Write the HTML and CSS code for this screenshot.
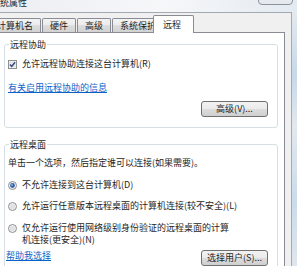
FILE: index.html
```html
<!DOCTYPE html>
<html lang="zh-CN">
<head>
  <meta charset="UTF-8" />
  <title>系统属性 - 远程</title>
  <link rel="stylesheet" href="styles.css">
</head>
<body>
  <div class="window">
    <div class="titlebar">
      <span class="title">系统属性</span>
      <span class="close-btn"></span>
    </div>

    <div class="frame-body">
      <div class="client">
        <div class="tabs">
          <span class="tab">计算机名</span>
          <span class="tab">硬件</span>
          <span class="tab">高级</span>
          <span class="tab">系统保护</span>
          <span class="tab tab-active">远程</span>
        </div>

        <div class="panel">
          <section class="group">
            <div class="group-title">远程协助</div>
            <label class="option check-row">
              <svg class="box" width="9" height="9" viewBox="0 0 9 9">
                <rect x="0.5" y="0.5" width="8" height="8" fill="#f3f3f3" stroke="#8e8f8f"/>
                <rect x="1.5" y="1.5" width="6" height="6" fill="#e4e6e8"/>
                <path d="M2 4.6 L3.7 6.4 L7.1 2.2" fill="none" stroke="#33437a" stroke-width="1.4"/>
              </svg>
              <span>允许远程协助连接这台计算机(R)</span>
            </label>
            <a class="link link-info" href="#">有关启用远程协助的信息</a>
            <button class="btn btn-advanced">高级(V)...</button>
          </section>

          <section class="group group-desktop">
            <div class="group-title">远程桌面</div>
            <p class="desc">单击一个选项，然后指定谁可以连接(如果需要)。</p>

            <label class="option radio-first">
              <svg class="dot" width="9" height="9" viewBox="0 0 9 9">
                <circle cx="4.5" cy="4.5" r="4" fill="#f1f2f3" stroke="#8e8f8f"/>
                <circle cx="4.5" cy="4.5" r="2.4" fill="#2f62a8"/>
                <circle cx="4" cy="4" r="0.9" fill="#8fb4e6"/>
              </svg>
              <span>不允许连接到这台计算机(D)</span>
            </label>

            <label class="option radio-second">
              <svg class="dot" width="9" height="9" viewBox="0 0 9 9">
                <circle cx="4.5" cy="4.5" r="4" fill="#f1f2f3" stroke="#8e8f8f"/>
                <circle cx="4.5" cy="4.5" r="2.6" fill="#dfe1e3"/>
              </svg>
              <span>允许运行任意版本远程桌面的计算机连接(较不安全)(L)</span>
            </label>

            <label class="option radio-third">
              <svg class="dot" width="9" height="9" viewBox="0 0 9 9">
                <circle cx="4.5" cy="4.5" r="4" fill="#f1f2f3" stroke="#8e8f8f"/>
                <circle cx="4.5" cy="4.5" r="2.6" fill="#dfe1e3"/>
              </svg>
              <span>仅允许运行使用网络级别身份验证的远程桌面的计算<br>机连接(更安全)(N)</span>
            </label>

            <div class="bottom-row">
              <a class="link link-help" href="#">帮助我选择</a>
              <button class="btn">选择用户(S)...</button>
            </div>
          </section>
        </div>
      </div>
      <div class="frame-edge"></div>
    </div>
  </div>
</body>
</html>
```

FILE: styles.css
```css
html, body {
  margin: 0;
  overflow: hidden;
  background: #f0f0f0;
  font-family: "Noto Sans CJK SC", "Noto Sans", sans-serif;
  font-size: 9px;
  color: #1e1e1e;
}
.window {
  width: 297px;
  height: 266px;
  overflow: hidden;
  display: flex;
  flex-direction: column;
}

/* title bar */
.titlebar {
  height: 12px;
  flex: none;
  display: flex;
  align-items: flex-start;
  background: linear-gradient(to right, #eceef1, #f6f7f9 55%, #e4eaf1);
}
.title {
  margin: -3px 0 0 -9px;
  line-height: 12px;
  color: #2a2a2a;
}
.close-btn {
  margin: -13px 4px 0 auto;
  width: 33px;
  height: 16px;
  border: 1px solid #8d939b;
  border-radius: 0 0 4px 4px;
  background: linear-gradient(#f4f6f8, #e3e7eb);
}

.frame-body {
  flex: 1;
  display: flex;
  min-height: 0;
}
.client {
  width: 292px;
  flex: none;
  border-top: 1px solid #a3aab2;
  border-right: 1px solid #a3aab2;
  padding: 2px 6px 0 0;
  box-sizing: border-box;
  background: #f0f0f0;
}
.frame-edge {
  flex: 1;
  background: linear-gradient(#e3e9ef, #c7d8e9 25%, #e2e8ee 45%, #cbdbea 75%, #dfe6ed);
}

/* tabs */
.tabs {
  height: 18px;
  margin: 0 0 -1px -11px;
  display: flex;
  align-items: flex-end;
}
.tab {
  height: 14px;
  line-height: 13px;
  margin: 0 1px 1px 0;
  padding: 0 7px;
  border: 1px solid #898c95;
  border-bottom: none;
  border-radius: 2px 2px 0 0;
  box-sizing: border-box;
  white-space: nowrap;
  background: linear-gradient(#f3f3f3, #ebebeb 50%, #dddddd 50%, #d2d2d2);
}
.tab-active {
  position: relative;
  z-index: 1;
  height: 18px;
  line-height: 17px;
  margin: 0 0 0 -12px;
  padding: 0 12px 0 9px;
  background: #fff;
}

/* panel */
.panel {
  margin-left: -3px;
  padding: 11px 6px 0 6px;
  border: 1px solid #898c95;
  background: #fff;
}
.group {
  display: flex;
  flex-direction: column;
  padding: 0 9px 10px 3px;
  border: 1px solid #d5dfe5;
  border-radius: 3px;
}
.group-desktop {
  margin-top: 16px;
}
.group-title {
  align-self: flex-start;
  margin: -6px 0 0 1px;
  padding: 0 1px;
  line-height: 11px;
  background: #fff;
}
.option {
  display: flex;
  align-items: center;
  line-height: 12px;
}
.option svg {
  flex: none;
  margin-right: 5px;
}
.check-row {
  margin-top: 8px;
}
.desc {
  margin: 7px 0 0;
  line-height: 12px;
}
.radio-first {
  margin-top: 10px;
}
.radio-second {
  margin-top: 9px;
}
.radio-third {
  margin-top: 10px;
  align-items: flex-start;
}
.radio-third svg {
  margin-top: 1.5px;
}

.link {
  align-self: flex-start;
  line-height: 12px;
  color: #0a62c8;
  text-decoration: underline;
}
.link-info {
  margin-top: 12px;
}
.link-help {
  margin-left: -2px;
}

.btn {
  width: 67px;
  height: 16px;
  padding: 0;
  font-family: inherit;
  font-size: 9px;
  line-height: 14px;
  color: #1e1e1e;
  border: 1px solid #707070;
  border-radius: 3px;
  background: linear-gradient(#f2f2f2, #ebebeb 50%, #dddddd 50%, #cfcfcf);
}
.btn-advanced {
  align-self: flex-end;
  margin-top: 7px;
}
.bottom-row {
  margin-top: 4px;
  display: flex;
  align-items: center;
  justify-content: space-between;
}
```
